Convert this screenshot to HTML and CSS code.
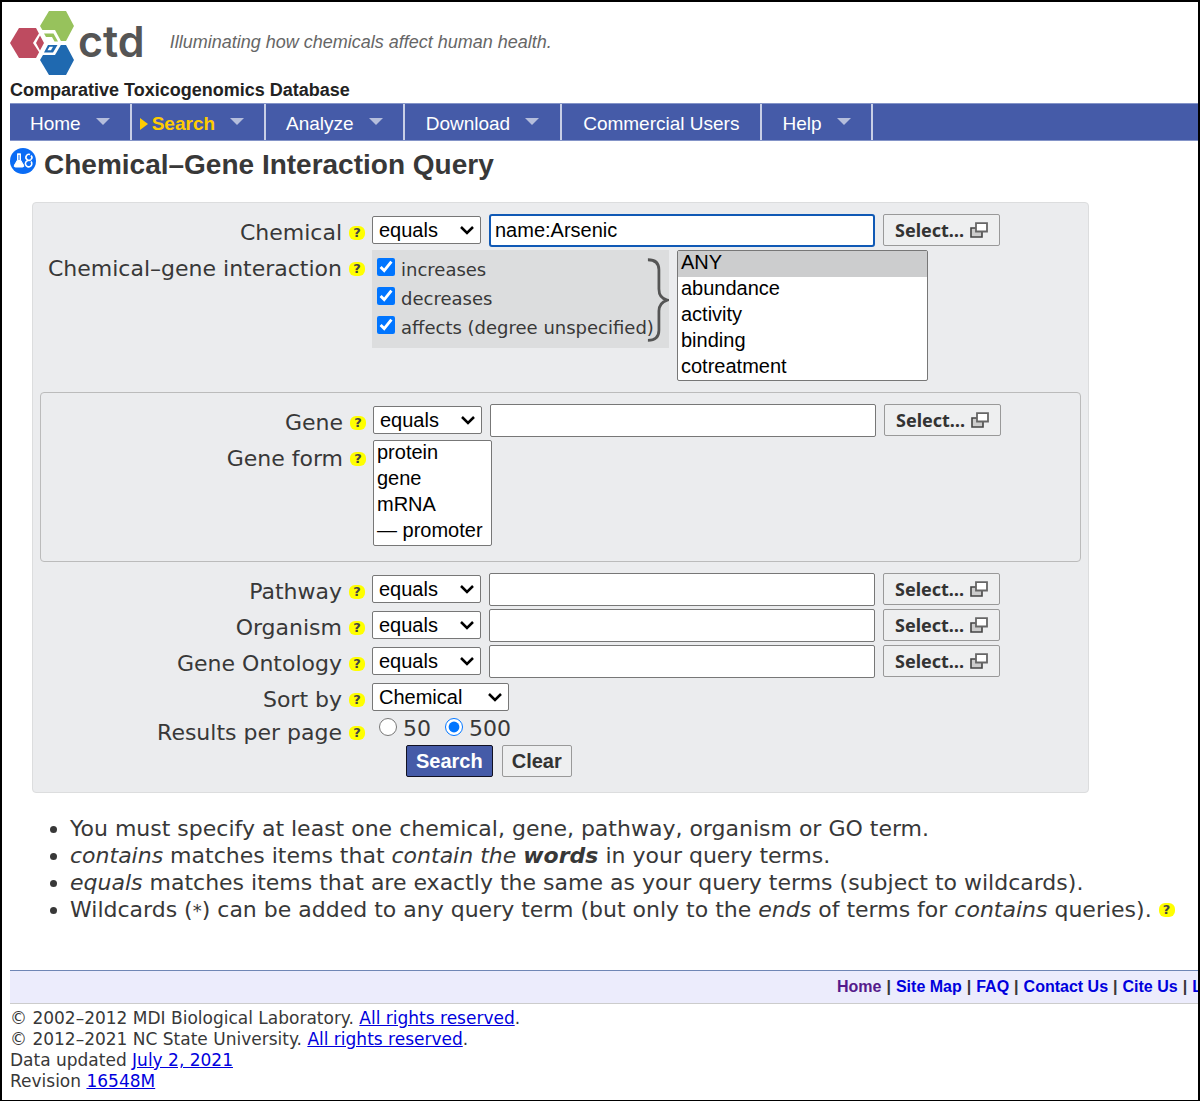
FILE: index.html
```html
<!DOCTYPE html>
<html lang="en">
<head>
<meta charset="utf-8">
<title>Chemical–Gene Interaction Query | CTD</title>
<link rel="stylesheet" href="styles.css">
</head>
<body>
<svg class="defs" width="0" height="0" aria-hidden="true">
  <symbol id="popup" viewBox="0 0 18 16">
    <path d="M1 6h11v9H1z" fill="#ccc" stroke="#444" stroke-width="1.6"/>
    <path d="M6 1.2h11v8.300H6z" fill="#fff" stroke="#666" stroke-width="1.8"/>
  </symbol>
</svg>
<div class="page">
  <header class="masthead">
    <div class="brand">
      <a class="logo" href="#" aria-label="ctd home">
        <svg width="66" height="66" viewBox="0 0 66 66" aria-hidden="true">
          <path d="M39 1h17l8 15-8 15H39l-9-15z" fill="#97c25c"/>
          <path d="M9 18h17l8 15-8 15H9L0 33z" fill="#be4b60"/>
          <path d="M39 35h17l8 15-8 15H39l-9-15z" fill="#1f69b0"/>
          <path d="M31 20h14l7 13-7 12H31l-8-12z" fill="#fff"/>
          <path d="M30 25.500l4 7.500-4 7.500-4-7.500z" fill="#be4b60"/>
          <path d="M34 23.500h9.500l4.500 8h-3.500l-2.500-4.500h-6z" fill="#97c25c"/>
          <path d="M38 35h9.500L43 42.500h-9z" fill="#1f69b0"/>
          <path d="M39.500 36.800h3.500l-2 3.500h-3.500z" fill="#fff"/>
        </svg>
        <span class="logo-text">ctd</span>
      </a>
      <p class="tagline">Illuminating how chemicals affect human health.</p>
    </div>
    <p class="site-name">Comparative Toxicogenomics Database</p>
  </header>

  <nav class="menu">
    <a class="menu-item" href="#">Home<span class="arrow"></span></a>
    <a class="menu-item current" href="#"><span class="marker"></span>Search<span class="arrow"></span></a>
    <a class="menu-item" href="#">Analyze<span class="arrow"></span></a>
    <a class="menu-item wide" href="#">Download<span class="arrow"></span></a>
    <a class="menu-item wide" href="#">Commercial Users</a>
    <a class="menu-item" href="#">Help<span class="arrow"></span></a>
  </nav>

  <main>
    <h1 class="title">
      <svg width="26" height="26" viewBox="0 0 26 26" aria-hidden="true">
        <circle cx="13" cy="13" r="13" fill="#0a6cf5"/>
        <path d="M7 6h4M7.500 6v6l-3 5q-1 2 1 2h7q2 0 1-2l-3-5V6z" fill="#fff" stroke="#fff"/>
        <path d="M8.500 7h1v5h-1z" fill="#0a6cf5"/>
        <g fill="none" stroke="#fff" stroke-width="1.600"><path d="M20 6.500a3 3 0 1 0 1 5"/><path d="M18 12.500a3.200 3.200 0 1 0 3 1"/><path d="M21 7.500q2 2 0 4"/></g>
      </svg>
      Chemical–Gene Interaction Query
    </h1>

    <form class="query">
      <div class="row">
        <div class="label"><label for="chem">Chemical</label><a class="help" href="#">?</a></div>
        <div class="fields">
          <select class="op" aria-label="Chemical operator"><option>equals</option></select>
          <input class="term focused" id="chem" type="text" value="name:Arsenic">
          <button class="btn pick" type="button">Select…<svg width="18" height="16"><use href="#popup"/></svg></button>
        </div>
      </div>
      <div class="row">
        <div class="label"><label for="ixn">Chemical–gene interaction</label><a class="help" href="#">?</a></div>
        <div class="fields">
          <div class="degrees">
            <div class="checks">
              <label class="check"><input type="checkbox" checked>increases</label>
              <label class="check"><input type="checkbox" checked>decreases</label>
              <label class="check"><input type="checkbox" checked>affects (degree unspecified)</label>
            </div>
            <svg class="brace" width="24" height="92" viewBox="0 0 24 92" aria-hidden="true">
              <path d="M1 1q12 0 12 11v21q0 10 9 12-9 3-9 12v21q0 11-12 11" fill="none" stroke="#555" stroke-width="3"/>
            </svg>
          </div>
          <select class="list actions" id="ixn" size="5" multiple>
            <option class="chosen">ANY</option><option>abundance</option><option>activity</option><option>binding</option><option>cotreatment</option>
          </select>
        </div>
      </div>

      <div class="group">
        <div class="row">
          <div class="label"><label for="gene">Gene</label><a class="help" href="#">?</a></div>
          <div class="fields">
            <select class="op" aria-label="Gene operator"><option>equals</option></select>
            <input class="term" id="gene" type="text">
            <button class="btn pick" type="button">Select…<svg width="18" height="16"><use href="#popup"/></svg></button>
          </div>
        </div>
        <div class="row">
          <div class="label"><label for="form">Gene form</label><a class="help" href="#">?</a></div>
          <div class="fields">
            <select class="list forms" id="form" size="4" multiple>
              <option>protein</option><option>gene</option><option>mRNA</option><option>— promoter</option>
            </select>
          </div>
        </div>
      </div>

      <div class="row">
        <div class="label"><label for="pathway">Pathway</label><a class="help" href="#">?</a></div>
        <div class="fields">
          <select class="op" aria-label="Pathway operator"><option>equals</option></select>
          <input class="term" id="pathway" type="text">
          <button class="btn pick" type="button">Select…<svg width="18" height="16"><use href="#popup"/></svg></button>
        </div>
      </div>
      <div class="row">
        <div class="label"><label for="organism">Organism</label><a class="help" href="#">?</a></div>
        <div class="fields">
          <select class="op" aria-label="Organism operator"><option>equals</option></select>
          <input class="term" id="organism" type="text">
          <button class="btn pick" type="button">Select…<svg width="18" height="16"><use href="#popup"/></svg></button>
        </div>
      </div>
      <div class="row">
        <div class="label"><label for="go">Gene Ontology</label><a class="help" href="#">?</a></div>
        <div class="fields">
          <select class="op" aria-label="Gene Ontology operator"><option>equals</option></select>
          <input class="term" id="go" type="text">
          <button class="btn pick" type="button">Select…<svg width="18" height="16"><use href="#popup"/></svg></button>
        </div>
      </div>
      <div class="row short">
        <div class="label"><label for="sort">Sort by</label><a class="help" href="#">?</a></div>
        <div class="fields">
          <select class="op sort" id="sort"><option>Chemical</option></select>
        </div>
      </div>
      <div class="row short">
        <div class="label"><span>Results per page</span><a class="help" href="#">?</a></div>
        <div class="fields radios">
          <label class="radio"><input type="radio" name="per">50</label>
          <label class="radio"><input type="radio" name="per" checked>500</label>
        </div>
      </div>
      <div class="submit">
        <button class="btn primary" type="button">Search</button>
        <button class="btn" type="button">Clear</button>
      </div>
    </form>

    <ul class="notes">
      <li>You must specify at least one chemical, gene, pathway, organism or GO term.</li>
      <li><em>contains</em> matches items that <em>contain the <strong>words</strong></em> in your query terms.</li>
      <li><em>equals</em> matches items that are exactly the same as your query terms (subject to wildcards).</li>
      <li>Wildcards (<span class="star">*</span>) can be added to any query term (but only to the <em>ends</em> of terms for <em>contains</em> queries). <a class="help" href="#">?</a></li>
    </ul>
  </main>

  <footer>
    <nav class="links">
      <a class="visited" href="#">Home</a><span>|</span><a href="#">Site Map</a><span>|</span><a href="#">FAQ</a><span>|</span><a href="#">Contact Us</a><span>|</span><a href="#">Cite Us</a><span>|</span><a href="#">Legal</a>
    </nav>
    <p class="legal">
      © 2002–2012 MDI Biological Laboratory. <a href="#">All rights reserved</a>.<br>
      © 2012–2021 NC State University. <a href="#">All rights reserved</a>.<br>
      Data updated <a href="#">July 2, 2021</a><br>
      Revision <a href="#">16548M</a>
    </p>
  </footer>
</div>
</body>
</html>
```
FILE: styles.css
```css
* { box-sizing: border-box; }
body {
  margin: 0;
  background: #fff;
  color: #383838;
  font: 22px/27px "DejaVu Sans", sans-serif;
}
.defs { position: absolute; }
.page {
  min-height: 100vh;
  border: 2px solid #000;
  padding: 8px 0 8px 8px;
  overflow: hidden;
}
p { margin: 0; }
.brand { display: flex; align-items: center; gap: 25px; }
.logo { display: flex; align-items: center; gap: 2px; color: #555; text-decoration: none; }
.logo-text { padding-bottom: 5px; font: 600 43px/48px Inter, sans-serif; }
.tagline { padding-bottom: 3px; font: italic 18px/24px "Liberation Sans", sans-serif; color: #666; }
.site-name { padding-top: 1px; font: bold 18px/26px "Liberation Sans", sans-serif; color: #222; }

.menu { display: flex; height: 38px; background: #455ba8; border: solid #8494c8; border-width: 1px 0; }
.menu-item {
  display: flex;
  align-items: center;
  padding: 3px 20px 0;
  border-right: 2px solid #c8cfe6;
  color: #fff;
  font: 19px/24px "Liberation Sans", sans-serif;
  text-decoration: none;
}
.wide { padding-left: 21px; padding-right: 21px; }
.current { color: #fc0; font-weight: bold; padding-left: 8px; }
.arrow { margin: 0 0 4px 15px; border: solid transparent; border-width: 7px 7px 0; border-top-color: #b5bedc; }
.marker { margin-right: 4px; border: solid transparent; border-width: 6px 0 6px 8px; border-left-color: #fc0; }

.title {
  display: flex;
  gap: 8px;
  margin: 6px 0 19px;
  font: bold 28px/36px "Liberation Sans", sans-serif;
}
.title svg { margin-top: 1px; }
.query {
  max-width: 1057px;
  margin: 0 109px 0 22px;
  padding: 9px 7px 15px;
  background: #ebecee;
  border: 1px solid #dcddde;
  border-radius: 4px;
}
.row { display: flex; gap: 7px; min-height: 36px; }
.short { min-height: 33px; }
.label { display: flex; flex: none; width: 325px; height: 33px; padding-top: 8px; justify-content: flex-end; align-items: center; gap: 7px; white-space: nowrap; }
.help {
  display: inline-block;
  width: 16px;
  border-radius: 6px;
  background: #ff0;
  color: #444;
  font: bold 13px/14px "DejaVu Sans", sans-serif;
  text-align: center;
  text-decoration: none;
}
.fields { display: flex; flex: 1; gap: 8px; align-items: flex-start; padding-top: 2px; }
select, input, button { margin: 0; font: 20px/24px "Liberation Sans", sans-serif; color: #000; }
.op {
  appearance: none;
  width: 109px;
  height: 28px;
  margin-top: 2px;
  padding: 0 6px;
  border: 1px solid #777;
  border-radius: 2px;
  background: #fff url("data:image/svg+xml,%3Csvg xmlns='http://www.w3.org/2000/svg' width='14' height='10'%3E%3Cpath d='M1 2l6 6 6-6' fill='none' stroke='%23000' stroke-width='2.500'/%3E%3C/svg%3E") no-repeat right 6px center;
}
.sort { width: 137px; }
.term { flex: 1; max-width: 386px; height: 33px; padding: 0 4px; border: 1px solid #777; border-radius: 2px; background: #fff; }
.focused { border: 2px solid #1059b5; border-radius: 3px; }
.btn {
  height: 32px;
  padding: 0 9px;
  border: 1px solid #999;
  border-radius: 2px;
  background: #eeeff0;
  color: #333;
  font: bold 20px/24px "Liberation Sans", sans-serif;
}
.pick { display: flex; align-items: center; gap: 6px; padding: 0 11px; font: bold 18px/24px "Noto Sans", sans-serif; }
.primary { background: #455ba8; border-color: #112; color: #fff; }

.degrees { display: flex; width: 297px; height: 98px; padding: 5px 0 0 5px; background: #dcddde; }
.checks { flex: none; width: 270px; font-size: 18px; white-space: nowrap; }
.check { display: flex; gap: 6px; height: 29px; align-items: center; }
.check input { flex: none; width: 18px; height: 18px; margin-bottom: 5px; }
.list { padding: 0; border: 1px solid #777; border-radius: 2px; background: #fff; overflow: hidden; }
.list option { padding: 0 3px; min-height: 0; height: 26px; line-height: 26px; }
.list .chosen { background: #cccdce; }
.actions { width: 251px; height: 131px; }
.forms { width: 119px; height: 106px; }
.group { margin: 11px 0 9px; padding: 9px 0 15px; border: 1px solid #bbb; border-radius: 4px; }

.radios { padding: 3px 0 0 7px; }
.radio { display: flex; gap: 6px; align-items: center; margin-right: 6px; }
.radio input { width: 18px; height: 18px; margin-bottom: 3px; }
.submit { display: flex; gap: 9px; padding-left: 366px; }

.notes { margin: 22px 0 46px; padding-left: 60px; }
.notes .help { vertical-align: 3px; }
.star { font-size: 18px; }

.links {
  display: flex;
  gap: 5px;
  padding-left: 827px;
  border-top: 1px solid #6f86b5;
  border-bottom: 1px solid #ccc;
  background: #ececfc;
  font: bold 16px/32px "Liberation Sans", sans-serif;
  white-space: nowrap;
}
.links a { text-decoration: none; color: #00d; }
.links .visited { color: #551a8b; }
.legal { padding-top: 4px; font-size: 17px; line-height: 21px; }
.legal a { color: #00d; }
```
